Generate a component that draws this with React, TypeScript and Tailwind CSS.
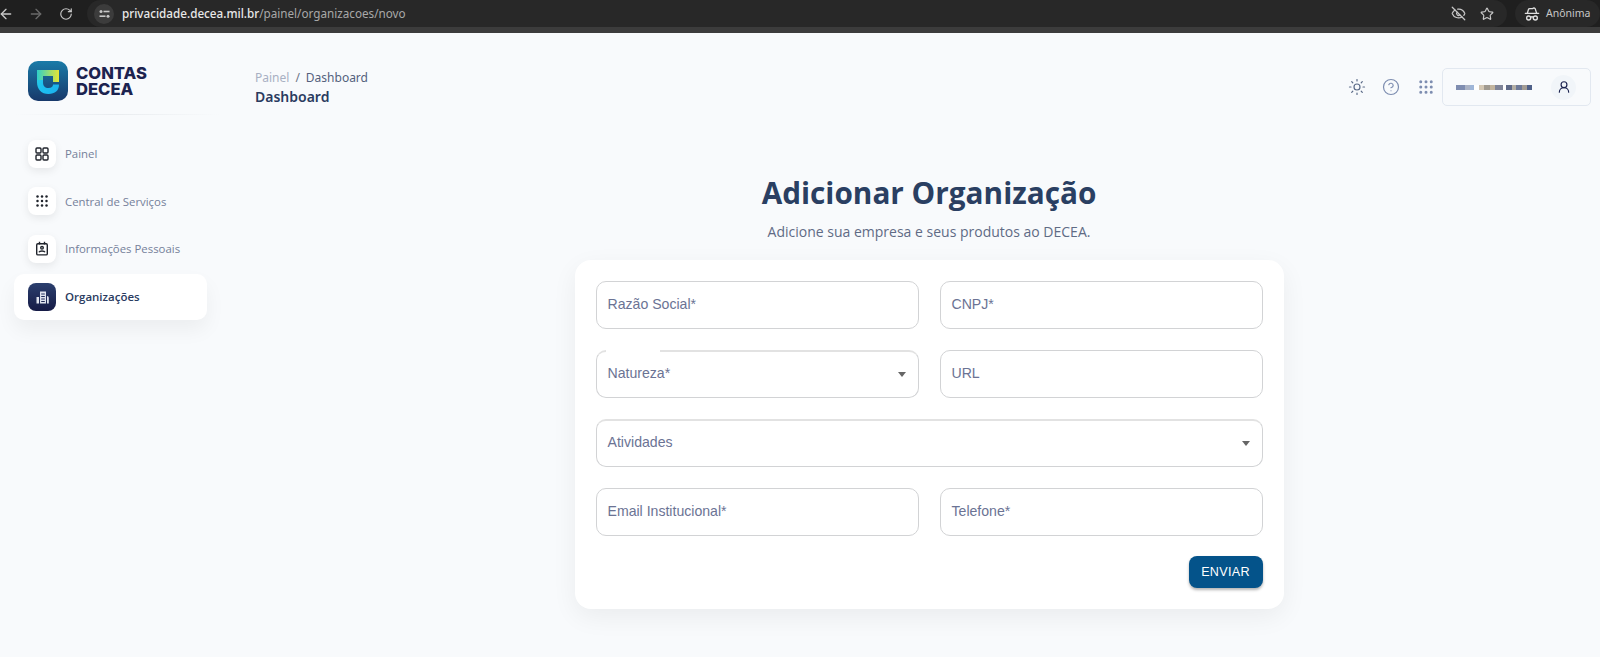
import React from 'react';
import { ArrowLeft, ArrowRight, RotateCw, EyeOff, Star, HatGlasses, Sun, CircleHelp, UserRound, Grip } from 'lucide-react';

const Field = ({ label, select, notch, className = '' }: { label: string; select?: boolean; notch?: boolean; className?: string }) => (
  <div className={`relative flex h-[48px] items-center rounded-[10px] border border-[#d2d3d5] bg-white px-[11px] ${select ? 'border-t-2 border-t-[#e2e2e2] pb-[2px]' : ''} ${className}`}>
    {notch && <span className="absolute left-[9px] top-[-2px] h-[2px] w-[54px] bg-white" />}
    <span className="text-[14.1px] text-[#6b7394]">{label}</span>
    {select && <span className="absolute right-[12px] top-[20px] h-0 w-0 border-x-[4.5px] border-t-[5px] border-x-transparent border-t-[#666]" />}
  </div>
);

const Logo = () => (
  <svg width="40" height="40" viewBox="0 0 40 40" className="shrink-0">
    <defs>
      <linearGradient id="logoBg" x1="0" y1="0" x2="0" y2="1">
        <stop offset="0" stopColor="#1a7ba8" />
        <stop offset="1" stopColor="#17386a" />
      </linearGradient>
      <linearGradient id="logoMark" x1="0" y1="0" x2="1" y2="0.6">
        <stop offset="0" stopColor="#2bd0e0" />
        <stop offset="0.5" stopColor="#1cc0f0" />
        <stop offset="1" stopColor="#1cb4ee" />
      </linearGradient>
      <linearGradient id="logoTop" x1="0" y1="0" x2="1" y2="0">
        <stop offset="0" stopColor="#2fd0c8" />
        <stop offset="1" stopColor="#e6e635" />
      </linearGradient>
    </defs>
    <rect width="40" height="40" rx="10" fill="url(#logoBg)" />
    <path d="M9 9 H31 V21 H25 V15 H15 V21 C15 25 17 27 20.5 27 C23.5 27 25 25.5 25 23.5 H31 C31 29.5 27 33 20.5 33 C13.5 33 9 28.5 9 21 Z" fill="url(#logoMark)" />
    <path d="M9 9 H31 V21 H25 V15 H15 V19 H9 Z" fill="url(#logoTop)" />
  </svg>
);

const DotsIcon = () => (
  <svg width="12" height="12" viewBox="0 0 12 12" fill="#20242c">
    {[1.5, 6, 10.5].flatMap((y) =>
      [1.5, 6, 10.5].map((x) => <circle key={`${x}-${y}`} cx={x} cy={y} r="1.25" />)
    )}
  </svg>
);

const SquaresIcon = () => (
  <svg width="14" height="14" viewBox="0 0 14 14" fill="none" stroke="#20242c" strokeWidth="1.4">
    <rect x="1" y="1" width="5" height="5" rx="1" />
    <rect x="8" y="1" width="5" height="5" rx="1" />
    <rect x="1" y="8" width="5" height="5" rx="1" />
    <rect x="8" y="8" width="5" height="5" rx="1" />
  </svg>
);

const BadgeIcon = () => (
  <svg width="14" height="15" viewBox="0 0 14 15" fill="none" stroke="#20242c" strokeWidth="1.4">
    <rect x="1.7" y="2.7" width="10.6" height="11.2" rx="1.2" />
    <path d="M4.5 0.8 V3.6 M9.5 0.8 V3.6" />
    <circle cx="7" cy="6.8" r="1.3" />
    <path d="M4 11.2 C4.6 9.6 9.4 9.6 10 11.2" />
  </svg>
);

const OrgIcon = () => (
  <svg width="15" height="15" viewBox="0 0 15 15" fill="#dfe3ee">
    <path d="M5 1.5 H11 V13.5 H5 Z M6.2 3.4 V4.4 H9.8 V3.4 Z M6.2 5.9 V6.9 H9.8 V5.9 Z M6.2 8.4 V9.4 H9.8 V8.4 Z M6.2 10.9 V11.9 H9.8 V10.9 Z" fillRule="evenodd" />
    <path d="M1.5 7 H4 V13.5 H1.5 Z M12 6 C13.2 6 13.8 6.8 13.8 8 V13.5 H12 Z" />
  </svg>
);

const navItems = [
  { label: 'Painel', icon: <SquaresIcon /> },
  { label: 'Central de Serviços', icon: <DotsIcon /> },
  { label: 'Informações Pessoais', icon: <BadgeIcon /> },
];

// blurred user name in the screenshot
const nameBlocks = [
  ['#7f8db0', 9], ['#aab2c4', 5], ['#9fb6d8', 4], ['#ffffff', 5], ['#d3c7b4', 5], ['#a09a90', 6], ['#c2b49e', 5], ['#7f8498', 8], ['#ffffff', 3], ['#5f6a88', 6], ['#b3aea4', 4], ['#6e7a98', 6], ['#a39c94', 5], ['#4f6088', 5],
] as const;

const App = () => (
  <div className="flex h-[657px] w-[1600px] flex-col overflow-hidden bg-[#f8fafc] font-['Open_Sans',sans-serif]">
    {/* Browser bar */}
    <div className="flex h-[33px] shrink-0 items-start border-b-[6px] border-[#3c3c3c] bg-[#1f1f1f] font-['Noto_Sans',sans-serif]">
      <div className="flex h-[27px] w-full items-center">
        <ArrowLeft size={16} className="ml-[-2px] text-[#c7c7c7]" />
        <ArrowRight size={16} className="ml-[14px] text-[#6a6a6a]" />
        <RotateCw size={14} className="ml-[15px] text-[#c7c7c7]" />
        <div className="ml-[14px] flex h-[27px] w-[1420px] items-center rounded-full bg-[#282828] pl-[7px]">
          <div className="flex h-[20px] w-[20px] items-center justify-center rounded-full bg-[#3c3c3c]">
            <svg width="11" height="10" viewBox="0 0 11 10" fill="#c7c7c7">
              <circle cx="2" cy="2.5" r="1.5" />
              <rect x="4.5" y="1.7" width="6" height="1.6" />
              <rect x="0.5" y="6.4" width="6" height="1.6" />
              <circle cx="9" cy="7.2" r="1.5" />
            </svg>
          </div>
          <span className="ml-[8px] text-[11.7px] text-[#a8a8a8]">
            <span className="font-medium text-[#e8e8e8]">privacidade.decea.mil.br</span>/painel/organizacoes/novo
          </span>
          <EyeOff size={15} className="ml-auto mr-[14px] text-[#c7c7c7]" />
          <Star size={14} className="mr-[13px] text-[#c7c7c7]" />
        </div>
        <div className="ml-[8px] flex h-[27px] flex-1 items-center rounded-full bg-[#282828] pl-[9px]">
          <HatGlasses size={16} className="text-[#e0e0e0]" />
          <span className="ml-[6px] text-[10.5px] text-[#c7c7c7]">Anônima</span>
        </div>
      </div>
    </div>

    <div className="flex min-h-0 flex-1">
      {/* Sidebar */}
      <aside className="flex w-[227px] shrink-0 flex-col pl-[14px]">
        <div className="ml-[14px] mt-[28px] flex items-center gap-[8px]">
          <Logo />
          <div className="font-['Inter',sans-serif] text-[16.6px] font-extrabold leading-[16px] text-[#1c2350]">
            CONTAS<br />DECEA
          </div>
        </div>
        <div className="mt-[13px] h-px w-[206px] bg-gradient-to-r from-transparent via-[#e9ecef] to-transparent" />
        <nav className="mt-[15px] flex flex-col">
          {navItems.map((item) => (
            <div key={item.label} className="flex h-[47.5px] w-[193px] items-center pl-[14px]">
              <div className="flex h-[28px] w-[28px] items-center justify-center rounded-[8px] bg-white shadow-[0_3px_8px_rgba(0,0,0,0.08)]">
                {item.icon}
              </div>
              <span className="ml-[9px] text-[11.4px] text-[#75809a]">{item.label}</span>
            </div>
          ))}
          <div className="mt-[1.5px] flex h-[46px] w-[193px] items-center rounded-[10px] bg-white pl-[14px] shadow-[0_10px_20px_rgba(0,0,0,0.05)]">
            <div className="flex h-[28px] w-[28px] items-center justify-center rounded-[8px] bg-gradient-to-b from-[#2b3f6e] to-[#161b46]">
              <OrgIcon />
            </div>
            <span className="ml-[9px] text-[11.5px] font-semibold text-[#2a3b60]">Organizações</span>
          </div>
        </nav>
      </aside>

      {/* Main */}
      <main className="flex min-w-0 flex-1 flex-col">
        <header className="flex items-start justify-between pr-[9px] pt-[36px] pl-[28px]">
          <div>
            <div className="font-['Noto_Sans',sans-serif] text-[12px] leading-[18px]">
              <span className="text-[#a8b0c3]">Painel</span>
              <span className="mx-[6px] text-[#6c7486]">/</span>
              <span className="text-[#53617d]">Dashboard</span>
            </div>
            <div className="font-['Noto_Sans',sans-serif] text-[14px] font-semibold leading-[20px] text-[#2a3b60]">Dashboard</div>
          </div>
          <div className="mt-[-1px] flex items-center">
            <Sun size={18} strokeWidth={1.6} className="text-[#5b6b88]" />
            <CircleHelp size={18} strokeWidth={1.6} className="ml-[16px] text-[#7d8db0]" />
            <Grip size={18} strokeWidth={2} className="ml-[17px] text-[#7d8db0]" />
            <div className="ml-[7px] flex h-[38px] w-[149px] items-center rounded-[5px] border border-[#e2e8f0] pl-[13px]">
              <div className="flex items-center blur-[0.6px]">
                {nameBlocks.map(([color, width], i) => (
                  <span key={i} className="block h-[5px]" style={{ backgroundColor: color, width }} />
                ))}
              </div>
              <div className="ml-auto mr-[14px] flex h-[25px] w-[25px] items-center justify-center rounded-full bg-[#f1f5f9]">
                <UserRound size={14} className="text-[#1c2350]" />
              </div>
            </div>
          </div>
        </header>

        <section className="mt-[64px] flex flex-col items-center pl-[31px]">
          <h1 className="text-[29.75px] font-bold leading-[44px] text-[#2a3f62]">Adicionar Organização</h1>
          <p className="mt-[7px] text-[14px] leading-[20px] text-[#5f6b85]">Adicione sua empresa e seus produtos ao DECEA.</p>

          <div className="mt-[18px] flex w-[709px] flex-col rounded-[16px] bg-white p-[21px] font-['Liberation_Sans',sans-serif] shadow-[0_8px_26px_rgba(0,0,0,0.06)]">
            <div className="grid grid-cols-2 gap-x-[21px] gap-y-[21px]">
              <Field label="Razão Social*" />
              <Field label="CNPJ*" />
              <Field label="Natureza*" select notch />
              <Field label="URL" />
              <Field label="Atividades" select className="col-span-2" />
              <Field label="Email Institucional*" />
              <Field label="Telefone*" />
            </div>
            <div className="mt-[20px] flex justify-end">
              <button className="h-[32px] w-[74px] rounded-[8px] bg-[#04538a] text-[12.6px] tracking-[0.3px] text-white shadow-[0_2px_3px_rgba(0,0,0,0.3)]">
                ENVIAR
              </button>
            </div>
          </div>
        </section>
      </main>
    </div>
  </div>
);

export default App;
